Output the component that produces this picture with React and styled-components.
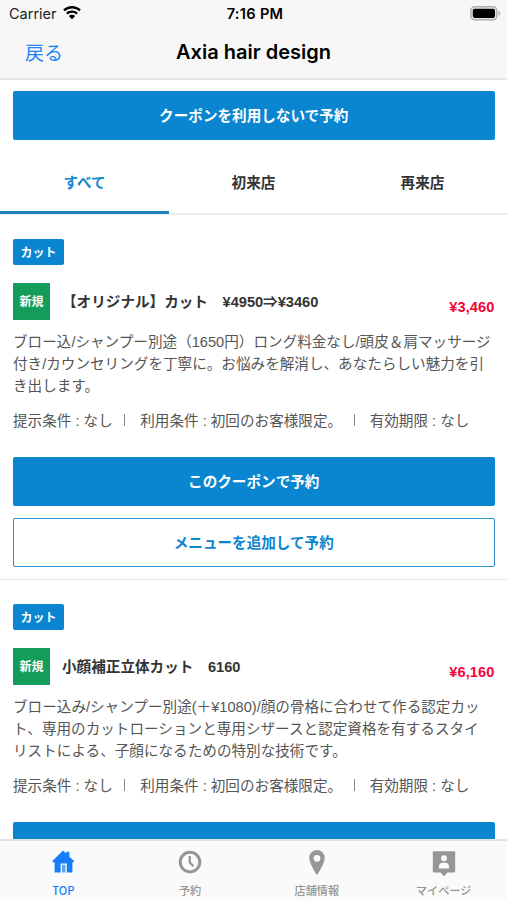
import React from 'react';
// Styles
import styled, { createGlobalStyle } from 'styled-components';

// Coupon data
const coupons = [
    {
        id: 1,
        category: 'カット',
        title: '【オリジナル】カット　¥4950⇒¥3460',
        price: '¥3,460',
        lines: [
            'ブロー込/シャンプー別途（1650円）ロング料金なし/頭皮＆肩マッサージ',
            '付き/カウンセリングを丁寧に。お悩みを解消し、あなたらしい魅力を引',
            'き出します。',
        ],
    },
    {
        id: 2,
        category: 'カット',
        title: '小顔補正立体カット　6160',
        price: '¥6,160',
        lines: [
            'ブロー込み/シャンプー別途(＋¥1080)/顔の骨格に合わせて作る認定カッ',
            'ト、専用のカットローションと専用シザースと認定資格を有するスタイ',
            'リストによる、子顔になるための特別な技術です。',
        ],
    },
];

const conditions = ['提示条件 : なし', '利用条件 : 初回のお客様限定。', '有効期限 : なし'];

const tabs = ['すべて', '初来店', '再来店'];

// Icons
const WifiIcon = () => (
    <svg width="18" height="14" viewBox="0 0 18 14">
        <path d="M9 0C5.600 0 2.500 1.300.2 3.500l1.600 1.700A10.400 10.400 0 0 1 9 2.400c2.800 0 5.300 1 7.200 2.800l1.600-1.700A12.700 12.700 0 0 0 9 0Z" />
        <path d="M9 4.400c-2.300 0-4.400.9-5.900 2.300l1.600 1.700A6.200 6.200 0 0 1 9 6.700c1.700 0 3.200.6 4.300 1.700l1.600-1.700A8.600 8.600 0 0 0 9 4.400Z" />
        <path d="M9 8.700c-1.200 0-2.300.5-3.100 1.200L9 13.200l3.100-3.300A4.600 4.600 0 0 0 9 8.700Z" />
    </svg>
);

const BatteryIcon = () => (
    <svg width="31" height="15" viewBox="0 0 31 15">
        <rect x=".9" y=".8" width="26" height="13" rx="3.8" fill="#e9e9e9" stroke="#b0b0b0" strokeWidth="1.5" />
        <rect x="2.8" y="2.7" width="22.2" height="9.2" rx="1.8" />
        <path d="M28.600 5v4.600c1-.4 1.700-1.300 1.700-2.300S29.600 5.400 28.600 5Z" fill="#a8a8a8" />
    </svg>
);

const HomeIcon = () => (
    <svg width="24" height="24" viewBox="0 0 24 24">
        <path d="M12 .6 15.200 3.600V1.800h3.200v4.900l4.600 4.300v1.200h-1.600v10.300h-5.600V13.400H9.600v9.100H3.600V12.200H1.400V11Z" />
        <path d="M11 14.800h3.400v7.700H11z" fillOpacity=".7" />
    </svg>
);

const ClockIcon = () => (
    <svg width="24" height="24" viewBox="0 0 24 24">
        <path fillRule="evenodd" d="M12 .8a11.300 11.300 0 1 0 0 22.600A11.300 11.300 0 0 0 12 .8Zm0 3a8.300 8.300 0 1 1 0 16.600A8.300 8.300 0 0 1 12 3.800Z" />
        <path d="M10.600 6h2.300v5.900l3.500 3.600-1.700 1.600-4.100-4.200Z" />
    </svg>
);

const PinIcon = () => (
    <svg width="24" height="26" viewBox="0 0 24 26">
        <path fillRule="evenodd" d="M12 0a7.700 7.700 0 0 0-7.700 7.700C4.300 13.700 12 25 12 25s7.700-11.300 7.700-17.300A7.700 7.700 0 0 0 12 0Zm0 4.900a3.400 3.400 0 1 1 0 6.800 3.400 3.400 0 0 1 0-6.800Z" />
    </svg>
);

const UserIcon = () => (
    <svg width="24" height="27" viewBox="0 0 24 27">
        <path fillRule="evenodd" d="M2 1.200h20c.7 0 1.200.5 1.200 1.200v19c0 .7-.5 1.200-1.200 1.200h-6.600L12 26.500l-3.400-3.900H2c-.7 0-1.200-.5-1.200-1.200v-19C.8 1.700 1.300 1.200 2 1.200Zm10 4.100a3 3 0 1 0 0 6 3 3 0 0 0 0-6ZM7 18.500h10v-2.300c0-2-1.700-3.500-3.400-3.500h-3.200c-1.700 0-3.400 1.500-3.400 3.500Z" />
    </svg>
);

const menus = [
    { label: 'TOP', icon: <HomeIcon />, active: true },
    { label: '予約', icon: <ClockIcon /> },
    { label: '店舗情報', icon: <PinIcon /> },
    { label: 'マイページ', icon: <UserIcon /> },
];

const Coupon = ({ coupon }) => (
    <Card>
        <Category>{coupon.category}</Category>
        <Heading>
            <NewLabel>新規</NewLabel>
            <h2>{coupon.title}</h2>
            <Price>{coupon.price}</Price>
        </Heading>
        <Description>
            {coupon.lines.map((line) => (
                <span key={line}>{line}</span>
            ))}
        </Description>
        <Conditions>
            {conditions.map((text) => (
                <li key={text}>{text}</li>
            ))}
        </Conditions>
        <Actions>
            <Button>このクーポンで予約</Button>
            <Button $outline>メニューを追加して予約</Button>
        </Actions>
    </Card>
);

const App = () => {
    return (
        <>
            <GlobalStyle />
            <Screen>
                <Header>
                    <StatusBar>
                        <Carrier>
                            Carrier <WifiIcon />
                        </Carrier>
                        <Time>7:16 PM</Time>
                        <BatteryIcon />
                    </StatusBar>
                    <NavBar>
                        <BackButton>戻る</BackButton>
                        <h1>Axia hair design</h1>
                    </NavBar>
                </Header>
                <Content>
                    <TopAction>
                        <Button>クーポンを利用しないで予約</Button>
                    </TopAction>
                    <Tabs>
                        {tabs.map((tab, i) => (
                            <Tab key={tab} $active={i === 0}>{tab}</Tab>
                        ))}
                    </Tabs>
                    {coupons.map((coupon) => (
                        <Coupon key={coupon.id} coupon={coupon} />
                    ))}
                </Content>
                <TabBar>
                    {menus.map(({ label, icon, active }) => (
                        <Menu key={label} $active={active}>
                            <MenuIcon>{icon}</MenuIcon>
                            {label}
                        </Menu>
                    ))}
                </TabBar>
            </Screen>
        </>
    );
};

// Styles
const GlobalStyle = createGlobalStyle`
  * {
    box-sizing: border-box;
    margin: 0;
    padding: 0;
  }

  body {
    overflow: hidden;
    background: white;
    color: #333;
    font-family: "Liberation Sans", "Noto Sans CJK JP", sans-serif;
    font-size: 14.6px;
  }

  button {
    font-family: inherit;
  }
`;

const Screen = styled.div`
  display: flex;
  flex-direction: column;
  width: 507px;
  height: 900px;
  overflow: hidden;
`;

const Header = styled.header`
  flex: none;
  height: 80px;
  background: #f7f7f7;
  border-bottom: 2px solid #e6e6e6;
  color: black;
  font-family: Inter, "Noto Sans CJK JP", sans-serif;
`;

const StatusBar = styled.div`
  display: grid;
  grid-template-columns: 1fr auto 1fr;
  align-items: center;
  height: 27px;
  padding: 0 6px 0 9px;

  > svg {
    justify-self: end;
  }
`;

const Carrier = styled.div`
  display: flex;
  align-items: center;
  gap: 6px;
  color: #222;
  font-size: 14.5px;

  svg {
    margin-bottom: 2px;
    fill: black;
  }
`;

const Time = styled.div`
  font-size: 14.6px;
  font-weight: 600;
  letter-spacing: 0.3px;
`;

const NavBar = styled.div`
  display: grid;
  grid-template-columns: 1fr auto 1fr;
  align-items: center;
  height: 49px;
  padding: 0 25px;

  h1 {
    font-size: 20px;
    font-weight: 600;
    letter-spacing: 0;
  }
`;

const BackButton = styled.button`
  justify-self: start;
  border: 0;
  background: none;
  color: #2385f8;
  font-size: 19px;
`;

const Content = styled.main`
  flex: 1;
  min-height: 0;
  overflow: hidden;
`;

const TopAction = styled.div`
  padding: 11px 12.5px 12px 13px;
`;

const Button = styled.button`
  display: block;
  width: 100%;
  height: 49px;
  padding-bottom: 2px;
  border: ${({ $outline }) => ($outline ? '1px solid #2f8fcf' : '0')};
  border-radius: 2px;
  background: ${({ $outline }) => ($outline ? 'white' : '#0a85cf')};
  color: ${({ $outline }) => ($outline ? '#0a85cf' : 'white')};
  font-size: 14.6px;
  font-weight: bold;
`;

const Tabs = styled.nav`
  display: grid;
  grid-template-columns: repeat(3, 1fr);
  height: 63px;
  border-bottom: 2px solid #eee;
`;

const Tab = styled.div`
  display: flex;
  align-items: center;
  justify-content: center;
  height: 62px;
  border-bottom: 3px solid ${({ $active }) => ($active ? '#1b85c4' : 'transparent')};
  color: ${({ $active }) => ($active ? '#1287cf' : '#333')};
  font-weight: bold;
`;

const Card = styled.section`
  height: 365px;
  padding: 24px 12.5px 0 13px;
  border-bottom: 1px solid #e2e2e2;
`;

const Category = styled.div`
  display: flex;
  align-items: center;
  justify-content: center;
  width: 51px;
  height: 26px;
  padding-bottom: 2px;
  border-radius: 2px;
  background: #0a85cf;
  color: white;
  font-size: 12px;
  font-weight: bold;
`;

const Heading = styled.div`
  display: flex;
  align-items: center;
  height: 37px;
  margin-top: 18px;

  h2 {
    flex: 1;
    margin-left: 12px;
    padding-bottom: 3px;
    font-size: 14.6px;
    white-space: nowrap;
  }
`;

const NewLabel = styled.div`
  display: flex;
  align-items: center;
  justify-content: center;
  width: 37px;
  height: 37px;
  padding-bottom: 2px;
  background: #139c5a;
  color: white;
  font-size: 12px;
  font-weight: bold;
`;

const Price = styled.div`
  padding-top: 10px;
  color: #f5033c;
  font-weight: bold;
  letter-spacing: 0.1px;
`;

const Description = styled.p`
  margin-top: 11px;
  color: #555;
  line-height: 22px;

  span {
    display: block;
    white-space: nowrap;
  }
`;

const Conditions = styled.ul`
  display: flex;
  margin-top: 13px;
  color: #555;
  line-height: 22px;
  list-style: none;
  white-space: nowrap;

  li + li::before {
    content: '';
    display: inline-block;
    width: 1px;
    height: 12px;
    margin: 0 15px 0 11.5px;
    background: #888;
  }
`;

const Actions = styled.div`
  display: grid;
  gap: 12px;
  margin-top: 25px;
`;

const TabBar = styled.footer`
  display: grid;
  flex: none;
  grid-template-columns: repeat(4, 1fr);
  height: 61px;
  border-top: 2px solid #e4e4e4;
  background: #fafafa;
`;

const Menu = styled.div`
  display: flex;
  flex-direction: column;
  align-items: center;
  color: ${({ $active }) => ($active ? '#147efb' : '#969696')};
  font-family: "Noto Sans CJK JP", sans-serif;
  font-size: 11.2px;
  font-weight: 500;
  line-height: 16px;

  svg {
    fill: currentColor;
  }
`;

const MenuIcon = styled.div`
  height: 32px;
  margin-top: 9px;
  line-height: 0;
`;

export default App;
